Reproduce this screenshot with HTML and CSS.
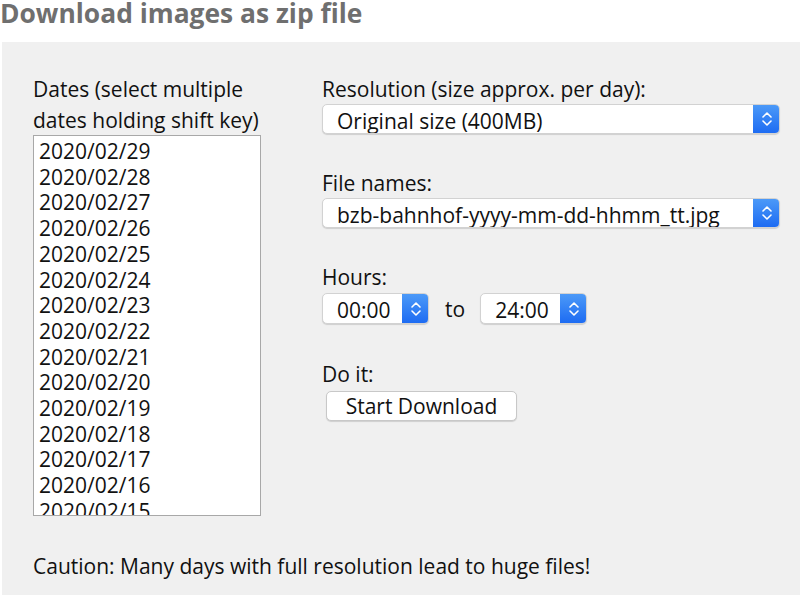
FILE: index.html
```html
<!DOCTYPE html>
<html>
<head>
<meta charset="utf-8">
<link rel="stylesheet" href="styles.css">
</head>
<body>
<h1 class="title">Download images as zip file</h1>
<div class="panel">
  <div class="columns">
    <div class="left">
      <div class="label">Dates (select multiple<br>dates holding shift key)</div>
      <div class="listbox">
        <div class="opt">2020/02/29</div>
        <div class="opt">2020/02/28</div>
        <div class="opt">2020/02/27</div>
        <div class="opt">2020/02/26</div>
        <div class="opt">2020/02/25</div>
        <div class="opt">2020/02/24</div>
        <div class="opt">2020/02/23</div>
        <div class="opt">2020/02/22</div>
        <div class="opt">2020/02/21</div>
        <div class="opt">2020/02/20</div>
        <div class="opt">2020/02/19</div>
        <div class="opt">2020/02/18</div>
        <div class="opt">2020/02/17</div>
        <div class="opt">2020/02/16</div>
        <div class="opt">2020/02/15</div>
      </div>
    </div>
    <div class="right">
      <div class="field">
        <div class="label">Resolution (size approx. per day):</div>
        <div class="select wide">
          <span class="value">Original size (400MB)</span>
          <span class="stepper"><svg width="12" height="18" viewBox="0 0 12 18"><path d="M2 7 L6 3 L10 7 M2 11 L6 15 L10 11" fill="none" stroke="#fff" stroke-width="1.6" stroke-linecap="round" stroke-linejoin="round"/></svg></span>
        </div>
      </div>
      <div class="field">
        <div class="label">File names:</div>
        <div class="select wide">
          <span class="value">bzb-bahnhof-yyyy-mm-dd-hhmm_tt.jpg</span>
          <span class="stepper"><svg width="12" height="18" viewBox="0 0 12 18"><path d="M2 7 L6 3 L10 7 M2 11 L6 15 L10 11" fill="none" stroke="#fff" stroke-width="1.6" stroke-linecap="round" stroke-linejoin="round"/></svg></span>
        </div>
      </div>
      <div class="field">
        <div class="label">Hours:</div>
        <div class="hours">
          <div class="select small">
            <span class="value">00:00</span>
            <span class="stepper"><svg width="12" height="18" viewBox="0 0 12 18"><path d="M2 7 L6 3 L10 7 M2 11 L6 15 L10 11" fill="none" stroke="#fff" stroke-width="1.6" stroke-linecap="round" stroke-linejoin="round"/></svg></span>
          </div>
          <span class="to">to</span>
          <div class="select small">
            <span class="value">24:00</span>
            <span class="stepper"><svg width="12" height="18" viewBox="0 0 12 18"><path d="M2 7 L6 3 L10 7 M2 11 L6 15 L10 11" fill="none" stroke="#fff" stroke-width="1.6" stroke-linecap="round" stroke-linejoin="round"/></svg></span>
          </div>
        </div>
      </div>
      <div class="field doit">
        <div class="label">Do it:</div>
        <button class="btn">Start Download</button>
      </div>
    </div>
  </div>
  <p class="caution">Caution: Many days with full resolution lead to huge files!</p>
</div>
</body>
</html>
```
FILE: styles.css
```css
html, body {
  margin: 0;
  padding: 0;
  background: #ffffff;
}
body {
  font-family: "Open Sans", "DejaVu Sans", sans-serif;
  color: #111;
  height: 595px;
  overflow: hidden;
}
.title {
  margin: 0;
  height: 42px;
  line-height: 26px;
  font-size: 26.4px;
  font-weight: 700;
  color: #6f6f6f;
}
.panel {
  margin-left: 2px;
  background: #f0f0f0;
  height: 553px;
  padding: 32px 0 0 31px;
  box-sizing: border-box;
}
.columns {
  display: flex;
  gap: 61px;
}
.left {
  width: 228px;
  display: flex;
  flex-direction: column;
}
.label {
  font-size: 21px;
  line-height: 31px;
  white-space: nowrap;
}
.listbox {
  background: #fff;
  border: 1px solid #a8a8a8;
  height: 381px;
  box-sizing: border-box;
  margin-top: -1px;
  overflow: hidden;
  padding: 3px 0 0 5px;
}
.opt {
  font-size: 21px;
  line-height: 25.7px;
}
.right {
  display: flex;
  flex-direction: column;
  gap: 34px;
}
.field {
  display: flex;
  flex-direction: column;
}
.field .label {
  line-height: 30px;
}
.field.doit {
  margin-top: 1px;
}
.select {
  display: flex;
  align-items: stretch;
  height: 30px;
  box-sizing: border-box;
  background: #fff;
  border: 1px solid #d2d2d2;
  border-radius: 5px;
  box-shadow: 0 1px 1px rgba(0,0,0,0.14);
  overflow: hidden;
  font-size: 21px;
}
.select.wide {
  width: 458px;
}
.select.small {
  width: 107px;
  height: 31px;
  margin-top: 1px;
}
.select .value {
  flex: 1;
  padding: 2px 0 0 14px;
  line-height: 28px;
  white-space: nowrap;
}
.stepper {
  width: 27px;
  flex: none;
  display: flex;
  align-items: center;
  justify-content: center;
  background: linear-gradient(#4d9bf8, #1c6af2);
  margin: -1px -1px -1px 0;
}
.hours {
  display: flex;
  align-items: center;
}
.to {
  font-size: 21px;
  margin: 2px 15px 0 16px;
}
.btn {
  align-self: flex-start;
  margin-left: 4px;
  margin-top: 2px;
  width: 191px;
  height: 30px;
  background: #fff;
  border: 1px solid #c8c8c8;
  border-radius: 5px;
  box-shadow: 0 1px 1px rgba(0,0,0,0.14);
  font-family: inherit;
  font-size: 21px;
  line-height: 28px;
  color: #111;
  padding: 0;
}
.caution {
  margin: 35px 0 0 0;
  font-size: 21px;
  line-height: 30px;
}
```
